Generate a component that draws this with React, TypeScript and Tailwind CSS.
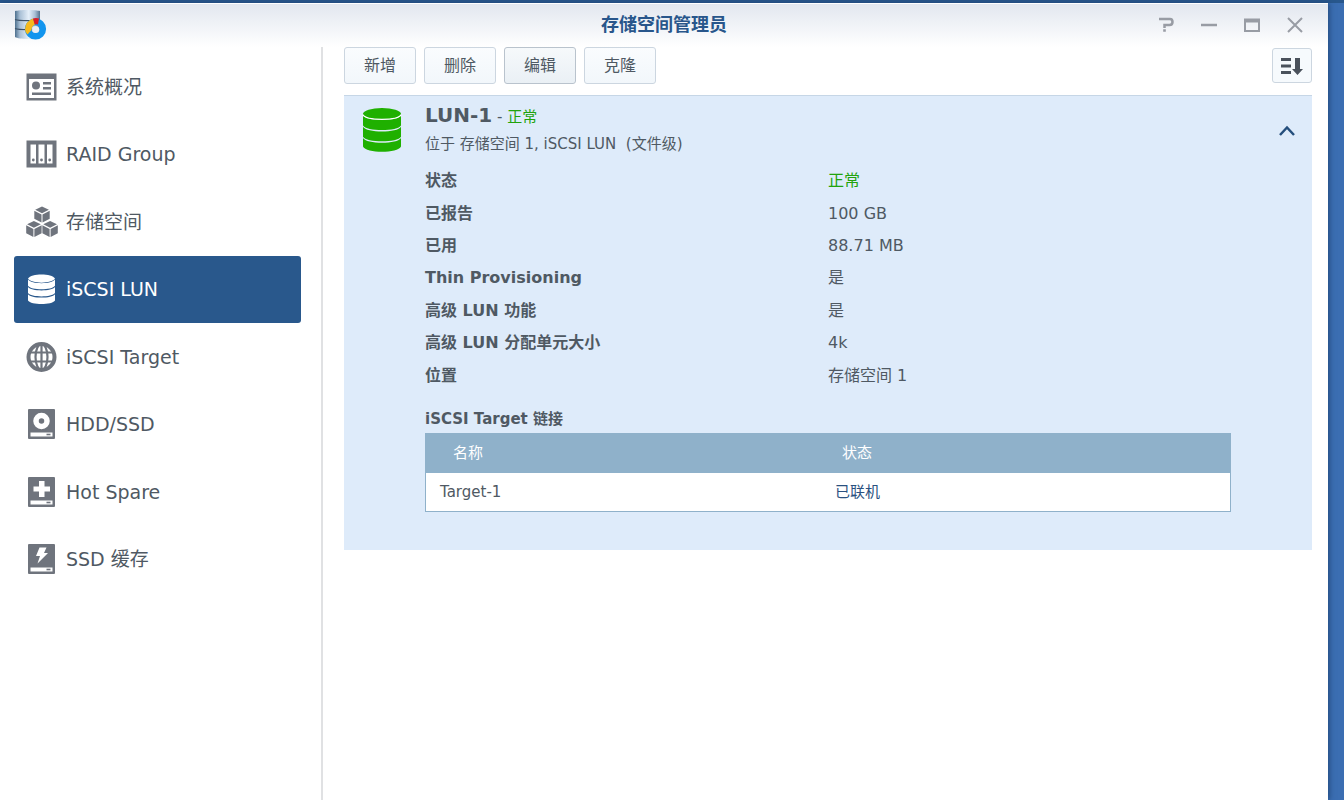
import React, { useState } from 'react';

const OverviewIcon = () => (
  <svg viewBox="0 0 32 32" className="size-8 shrink-0" fill="currentColor" aria-hidden="true">
    <path fillRule="evenodd" d="M.5 2.5h30V29.500H.5zM3 8v19h25V8z" />
    <circle cx="10" cy="14.500" r="4" />
    <path d="M17 11h8v2.500h-8zM17 16h8v2.500h-8zM6 21.500h19V24H6z" />
  </svg>
);

const RaidIcon = () => (
  <svg viewBox="0 0 32 32" className="size-8 shrink-0" fill="currentColor" aria-hidden="true">
    <path fillRule="evenodd" d="M.5 2.500h30V29.500H.5zM4.500 6.500v19h5.500v-19zM12.500 6.500v19h6v-19zM21 6.500v19h5.500v-19z" />
    <circle cx="7.300" cy="22" r="1.400" />
    <circle cx="15.500" cy="22" r="1.400" />
    <circle cx="23.700" cy="22" r="1.400" />
  </svg>
);

const Cube = ({ x, y }: { x: number; y: number }) => (
  <g transform={`translate(${x} ${y})`}>
    <path d="M7.700 0L14.600 3.300 7.700 6.800 .9 3.300z" />
    <path d="M0 4.300L7.200 8V16L0 12.300z" />
    <path d="M15.400 4.300L8.200 8V16L15.400 12.300z" />
  </g>
);

const VolumeIcon = () => (
  <svg viewBox="0 0 32 32" className="size-8 shrink-0" fill="currentColor" aria-hidden="true">
    <Cube x={8.3} y={0.5} />
    <Cube x={0.2} y={15} />
    <Cube x={16.4} y={15} />
  </svg>
);

const LunIcon = ({ className }: { className: string }) => (
  <svg viewBox="0 0 40 44" className={className} fill="currentColor" aria-hidden="true">
    <ellipse cx="20" cy="5.800" rx="19" ry="5.800" />
    <path d="M1 7.200C4 13.500 36 13.500 39 7.200V17.400C36 23.500 4 23.500 1 17.400z" />
    <path d="M1 18.700C4 25 36 25 39 18.700V28.700C36 34.800 4 34.800 1 28.700z" />
    <path d="M1 30C4 36.300 36 36.300 39 30V38.500C36 45.500 4 45.500 1 38.500z" />
    <path d="M1 6.800C4 12.800 36 12.800 39 6.800" fill="none" className="stroke-white" strokeWidth="1.200" />
  </svg>
);

const TargetIcon = () => (
  <svg viewBox="0 0 32 32" className="size-8 shrink-0" fill="none" stroke="currentColor" aria-hidden="true">
    <circle cx="15.500" cy="16" r="13" strokeWidth="4" />
    <ellipse cx="15.500" cy="16" rx="6" ry="13" strokeWidth="2.200" />
    <path d="M15.500 3v26M3 11.500h25M3 20.500h25" strokeWidth="2.200" />
  </svg>
);

const DriveIcon = ({ children }: { children: React.ReactNode }) => (
  <svg viewBox="0 0 32 32" className="size-8 shrink-0" fill="currentColor" aria-hidden="true">
    <rect x="2" y="1" width="27" height="30" rx="1" />
    <path d="M4.500 24.500h22v4h-22z" fill="white" />
    <path d="M20.500 25.700h4v1.600h-4z" />
    {children}
  </svg>
);

const HddIcon = () => (
  <DriveIcon>
    <circle cx="15.500" cy="13" r="5.500" fill="none" stroke="white" strokeWidth="5.500" />
  </DriveIcon>
);

const SpareIcon = () => (
  <DriveIcon>
    <path d="M13 5h5.500v5.500H24V15.500H18.500V21H13V15.500H7.500V10.500H13z" fill="white" />
  </DriveIcon>
);

const CacheIcon = () => (
  <DriveIcon>
    <path d="M13.500 4.500H20.500L18 10h4L11.500 20.500l2.500-7.500H10z" fill="white" />
  </DriveIcon>
);

const AppLogo = () => (
  <svg viewBox="0 0 34 32" className="h-8 w-[34px]" aria-hidden="true">
    <defs>
      <linearGradient id="disk" x1="0" x2="1">
        <stop offset="0" stopColor="#4d708e" />
        <stop offset=".2" stopColor="#a9c0d6" />
        <stop offset=".55" stopColor="#e6f0fa" />
        <stop offset=".8" stopColor="#a9c0d6" />
        <stop offset="1" stopColor="#54728e" />
      </linearGradient>
    </defs>
    <path d="M2 2C6 .5 23 .5 27 2V28C23 30.500 6 30.500 2 28z" fill="url(#disk)" />
    <path d="M2 10.500c4 1.500 21 1.500 25 0M2 19.500c4 1.500 21 1.500 25 0" fill="none" stroke="#3c5066" strokeWidth="1.300" />
    <circle cx="22.500" cy="20" r="7.200" fill="none" stroke="#1295ee" strokeWidth="6.800" />
    <path d="M12 20.500Q12.500 12 20 9.500L22 15.500Q18.500 17 18.500 21L14.500 25.500Q12 23.500 12 20.500z" fill="#f6b91c" />
    <path d="M20 9.500Q23 8.500 26 9.500L25 15.500Q23.500 15 21.700 15.500z" fill="#dc1c24" />
    <circle cx="22.700" cy="20.500" r="3.600" fill="#e9eef4" />
  </svg>
);

const menu = [
  { label: '系统概况', icon: <OverviewIcon /> },
  { label: 'RAID Group', icon: <RaidIcon /> },
  { label: '存储空间', icon: <VolumeIcon /> },
  {
    label: 'iSCSI LUN',
    icon: (
      <svg viewBox="0 0 32 32" className="size-8 shrink-0" fill="currentColor" aria-hidden="true">
        <path d="M2 5.500C5 0 26 0 29 5.500C26 11 5 11 2 5.500z" />
        <path d="M2 6.600C5 11.500 26 11.500 29 6.600V12.800C26 17.500 5 17.500 2 12.800z" />
        <path d="M2 14C5 18.500 26 18.500 29 14V20C26 24.500 5 24.500 2 20z" />
        <path d="M2 21.200C5 25.700 26 25.700 29 21.200V27.500C26 32.200 5 32.200 2 27.500z" />
      </svg>
    ),
  },
  { label: 'iSCSI Target', icon: <TargetIcon /> },
  { label: 'HDD/SSD', icon: <HddIcon /> },
  { label: 'Hot Spare', icon: <SpareIcon /> },
  { label: 'SSD 缓存', icon: <CacheIcon /> },
];

const actions = ['新增', '删除', '编辑', '克隆'];

const details = [
  { name: '状态', value: '正常', ok: true },
  { name: '已报告', value: '100 GB' },
  { name: '已用', value: '88.71 MB' },
  { name: 'Thin Provisioning', value: '是' },
  { name: '高级 LUN 功能', value: '是' },
  { name: '高级 LUN 分配单元大小', value: '4k' },
  { name: '位置', value: '存储空间 1' },
];

const targets = [{ name: 'Target-1', status: '已联机' }];

const windowControls = [
  {
    label: '帮助',
    icon: (
      <>
        <path d="M1 2h11Q14.500 2 14.500 5T11.500 8H6.500v3" strokeWidth="2.500" />
        <path d="M5.200 13.500h2.600" strokeWidth="2.500" />
      </>
    ),
  },
  { label: '最小化', icon: <path d="M0 8h16" strokeWidth="2.500" /> },
  {
    label: '最大化',
    icon: (
      <>
        <path d="M1 2.500h14v11.500H1z" strokeWidth="2" />
        <path d="M1 4h14" strokeWidth="3" />
      </>
    ),
  },
  { label: '关闭', icon: <path d="M1 1l14 14M15 1L1 15" strokeWidth="2" /> },
];

const App = () => {
  const [active, setActive] = useState('iSCSI LUN');
  const [open, setOpen] = useState(true);

  return (
    <div className="flex min-h-screen overflow-hidden bg-[#3b6eb2] pr-4 pt-[3px] font-['DejaVu_Sans','Noto_Sans_CJK_SC',sans-serif] text-[#4f5963] shadow-[inset_0_3px_0_#28578c]">
      <div className="flex flex-1 flex-col bg-white shadow-[1px_0_6px_#1f4577]">
        {/* Title bar */}
        <header className="grid h-11 grid-cols-[1fr_auto_1fr] items-center border-t border-white bg-linear-to-b from-[#e2e7ef] to-white pb-[2px]">
          <div className="pl-[13px]">
            <AppLogo />
          </div>
          <h1 className="text-lg font-bold text-[#28568b]">存储空间管理员</h1>
          <div className="flex justify-end gap-[27px] pr-[25px]">
            {windowControls.map((control) => (
              <button key={control.label} type="button" aria-label={control.label} className="text-[#989ca4]">
                <svg viewBox="0 0 16 16" className="size-4" fill="none" stroke="currentColor">
                  {control.icon}
                </svg>
              </button>
            ))}
          </div>
        </header>

        <div className="flex flex-1">
          {/* Sidebar */}
          <nav className="w-[323px] shrink-0 border-r-2 border-[#e0e1e3] pl-[14px] pr-5 pt-1.5">
            <div className="grid min-h-[540px] auto-rows-fr">
              {menu.map((item) => (
                <button
                  key={item.label}
                  type="button"
                  onClick={() => setActive(item.label)}
                  className={`flex items-center gap-2 rounded-[3px] pl-3 text-left text-[19px] ${
                    active === item.label ? 'bg-[#29588c] text-white' : 'text-[#4f5963]'
                  }`}
                >
                  <span className={active === item.label ? 'text-white' : 'text-[#6f747d]'}>{item.icon}</span>
                  {item.label}
                </button>
              ))}
            </div>
          </nav>

          <main className="min-w-0 flex-1 pl-[21px] pr-4">
            {/* Toolbar */}
            <div className="flex items-center justify-between">
              <div className="flex gap-2">
                {actions.map((action) => (
                  <button
                    key={action}
                    type="button"
                    className={`h-[37px] w-[72px] rounded-[3px] border bg-linear-to-b text-base ${
                      action === '编辑' ? 'border-[#b9c3cd] from-[#f6f9fb] to-[#eaf0f5]' : 'border-[#ccd6e0] from-[#fafcfe] to-[#f2f7fb]'
                    }`}
                  >
                    {action}
                  </button>
                ))}
              </div>
              <button
                type="button"
                aria-label="排序"
                className="flex h-[35px] w-10 items-center justify-center rounded-[3px] border border-[#ccd6e0] bg-[#f6fafd]"
              >
                <svg viewBox="0 0 22 18" className="h-[18px] w-[22px]" fill="#4a525c">
                  <path d="M0 1h10v3H0zM0 7.500h10v3H0zM0 14h10v3H0zM14 1h5v11h3l-5.500 6L11 12h3z" />
                </svg>
              </button>
            </div>

            {/* LUN details */}
            <section className="mt-[11px] border-t border-[#c6d6e6] bg-[#deebfa]">
              <div className="flex items-start pl-[18px] pr-[17px] pt-[7px]">
                <LunIcon className="mt-[5px] h-11 w-10 shrink-0 text-[#1fb000]" />
                <div className="flex-1 pl-[23px]">
                  <h2 className="text-base leading-6">
                    <span className="text-xl font-bold leading-6">LUN-1</span>
                    <span className="text-[15px]"> - </span>
                    <span className="text-[15px] text-[#22a30c]">正常</span>
                  </h2>
                  <p className="mt-[3px] text-[15px] leading-6">位于 存储空间 1, iSCSI LUN&nbsp; (文件级)</p>
                </div>
                <button
                  type="button"
                  aria-label="展开或收起"
                  aria-expanded={open}
                  onClick={() => setOpen(!open)}
                  className="mt-5 text-[#244e7c]"
                >
                  <svg viewBox="0 0 16 16" className={`size-4 ${open ? '' : 'rotate-180'}`} fill="none" stroke="currentColor" strokeWidth="2.5">
                    <path d="M1 12l7-7.500 7 7.500" />
                  </svg>
                </button>
              </div>

              {open && (
                <div className="px-[81px] pb-[38px] pt-[9px]">
                  <dl className="grid min-h-[227px] auto-rows-fr text-base">
                    {details.map((row) => (
                      <div key={row.name} className="grid grid-cols-2 items-center">
                        <dt className="font-bold">{row.name}</dt>
                        <dd className={row.ok ? 'text-[#22a30c]' : ''}>{row.value}</dd>
                      </div>
                    ))}
                  </dl>

                  <h3 className="mt-[15px] text-[15px] font-bold leading-6">iSCSI Target 链接</h3>
                  <table className="mt-[2px] w-full table-fixed border border-[#8fb1ca] bg-white text-left text-[15px]">
                    <thead className="bg-[#8fb1ca] text-white">
                      <tr className="h-[39px]">
                        <th className="w-[49%] pl-[27px] font-normal">名称</th>
                        <th className="pl-[22px] font-normal">状态</th>
                      </tr>
                    </thead>
                    <tbody>
                      {targets.map((target) => (
                        <tr key={target.name} className="h-[39px]">
                          <td className="pl-[14px]">{target.name}</td>
                          <td className="pl-[15px] text-[#2b5180]">{target.status}</td>
                        </tr>
                      ))}
                    </tbody>
                  </table>
                </div>
              )}
            </section>
          </main>
        </div>
      </div>
    </div>
  );
};

export default App;
